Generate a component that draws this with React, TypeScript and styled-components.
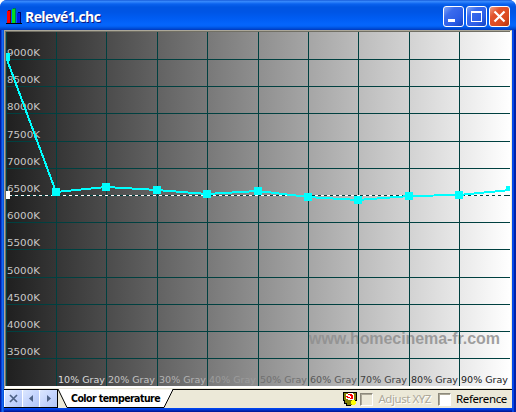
import React from "react";
import styled, { createGlobalStyle } from "styled-components";

const Global = createGlobalStyle`
  html, body { margin: 0; padding: 0; background: #fff; overflow: hidden; }
  * { box-sizing: border-box; }
`;

const Window = styled.main`
  width: 516px;
  height: 412px;
  display: flex;
  flex-direction: column;
  overflow: hidden;
  border-radius: 7px 7px 0 0;
  background: #0543e0;
`;

const TitleBar = styled.header`
  height: 30px;
  flex: none;
  display: flex;
  align-items: center;
  padding: 3px 6px 0 6px;
  background: linear-gradient(
    180deg,
    #0a4bd0 0, #3a8bfa 1px, #2f82fb 2px, #0a62ee 4px, #0055e2 7px,
    #0055e5 12px, #005cf2 18px, #0465fb 24px, #0463f8 26px, #0052dc 28px, #0038bd 30px
  );
`;

const Title = styled.h1`
  flex: 1;
  margin: 0 0 0 3px;
  font: 700 14px/20px "Open Sans", "Noto Sans", sans-serif;
  letter-spacing: -0.6px;
  color: #fff;
  text-shadow: 1px 1px 0 #0a1883;
  white-space: nowrap;
`;

const Controls = styled.div`
  display: flex;
  gap: 2px;
`;

const ControlButton = styled.button<{ $danger?: boolean }>`
  width: 21px;
  height: 21px;
  padding: 0;
  border: 1px solid #fff;
  border-radius: 3px;
  background: ${(p) =>
    p.$danger
      ? "linear-gradient(135deg, #f0a188 0, #e2532c 30%, #da4a20 70%, #b5330d 100%)"
      : "linear-gradient(135deg, #82a6f6 0, #3a6bed 30%, #2a5ce6 70%, #1342c0 100%)"};
  svg { display: block; }
`;

const Body = styled.section`
  flex: 1;
  display: flex;
  flex-direction: column;
  padding: 0 4px 4px;
  background: linear-gradient(90deg, #001ea0 0 1px, #0843dc 1px 2px, #166aee 2px 3px, #0855dd 3px 4px, transparent 4px 512px, #0548e8 512px 514px, #0022a8 514px),
    linear-gradient(180deg, transparent 378px, #0045ee 378px 379px, #0030c8 380px, #00138c 382px);
`;

const Client = styled.div`
  flex: 1;
  display: flex;
  flex-direction: column;
  background: #ece9d8;
`;

const ChartFrame = styled.div`
  height: 359px;
  display: flex;
  padding: 0 1px 2px 0;
  border-top: 1px solid #aca899;
  border-left: 1px solid #aca899;
  border-right: 1px solid #ece9d8;
  border-bottom: 1px solid #ece9d8;
  background: #fff;
`;

const ChartInner = styled.div`
  width: 505px;
  height: 355px;
  border-top: 1px solid #716f64;
  border-left: 1px solid #716f64;
`;

const Chart = styled.svg`
  display: block;
`;

const AxisText = styled.text`
  font: 9px "DejaVu Sans", sans-serif;
`;

const Watermark = styled.text`
  font: 700 16px "Liberation Sans", Arial, sans-serif;
  fill: #8f8f8f;
  fill-opacity: 0.85;
`;

const TabBar = styled.footer`
  flex: 1;
  display: flex;
  background: #ece9d8;
`;

const NavGroup = styled.div`
  width: 54px;
  display: flex;
  gap: 1px;
  padding: 0 0 0 1px;
  border: solid #000;
  border-width: 1px 1px 1px 0;
  background: #fff;
`;

const NavButton = styled.button`
  flex: 1;
  display: grid;
  place-items: center;
  padding: 0;
  border: 0;
  border-radius: 1px;
  background: linear-gradient(135deg, #dce7ff, #c3d3fd 55%, #b3c6f5);
`;

const Tab = styled.div`
  width: 117px;
  display: grid;
  > * { grid-area: 1 / 1; }
`;

const TabLabel = styled.span`
  padding-left: 13px;
  font: 700 10.5px/19px "DejaVu Sans Condensed", "DejaVu Sans", sans-serif;
  font-stretch: condensed;
  letter-spacing: -0.55px;
  color: #000;
  white-space: nowrap;
`;

const Options = styled.div`
  flex: 1;
  display: flex;
  align-items: center;
  justify-content: flex-end;
  padding-right: 5px;
  border-top: 1px solid #000;
`;

const Toggle = styled.label<{ $disabled?: boolean }>`
  display: flex;
  align-items: center;
  gap: 5px;
  margin-left: ${(p) => (p.$disabled ? "3px" : "7px")};
  font: 11.5px/16px "Noto Sans", sans-serif;
  letter-spacing: ${(p) => (p.$disabled ? "-0.45px" : "-0.35px")};
  color: ${(p) => (p.$disabled ? "#aca899" : "#000")};
  text-shadow: ${(p) => (p.$disabled ? "1px 1px 0 #fff" : "none")};
  white-space: nowrap;
`;

const Box = styled.span<{ $disabled?: boolean }>`
  width: 13px;
  height: 13px;
  border: 1px solid;
  border-color: #8c897c #fff #fff #8c897c;
  box-shadow: inset 1px 1px 0 #aca899;
  background: ${(p) => (p.$disabled ? "#ece9d8" : "#fff")};
`;

const COLUMNS = [6, 56, 106, 157, 207, 258, 308, 358, 409, 459];
const ROWS = [59, 86, 113, 141, 168, 195, 222, 249, 277, 304, 331, 358];
const GRAY_LABELS = ["#dcdcdc", "#c4c4c4", "#b4b4b4", "#9c9c9c", "#707070", "#585858", "#404040", "#2a2a2a", "#161616"];
const POINTS = [
  [6, 57], [56, 192], [106, 187], [157, 190], [207, 194], [258, 191],
  [308, 197], [358, 200], [409, 196], [459, 195], [510, 190],
];

function TemperatureChart() {
  return (
    <Chart width="504" height="354" viewBox="6 32 504 354">
      <defs>
        <linearGradient id="ramp">
          <stop offset="0" stopColor="#1f1f1f" />
          <stop offset="1" stopColor="#fff" />
        </linearGradient>
      </defs>
      <rect x="6" y="32" width="504" height="354" fill="url(#ramp)" />
      <Watermark x="309" y="344" textLength="191">www.homecinema-fr.com</Watermark>
      <g fill="#004040" shapeRendering="crispEdges">
        {COLUMNS.map((x) => <rect key={x} x={x} y="32" width="1" height="354" />)}
        {ROWS.map((y) => <rect key={y} x="6" y={y} width="504" height="1" />)}
      </g>
      {ROWS.map((y, i) => (
        <AxisText key={y} x="7" y={y - 3} textLength="33" lengthAdjust="spacingAndGlyphs" fill="#c8c8c8">{`${9000 - i * 500}K`}</AxisText>
      ))}
      {GRAY_LABELS.map((fill, i) => (
        <AxisText key={fill} x={COLUMNS[i + 1] + 2} y="383" textLength="47" lengthAdjust="spacingAndGlyphs" fill={fill}>{`${(i + 1) * 10}% Gray`}</AxisText>
      ))}
      <path d="M9 195.5H505" stroke="#fff" strokeDasharray="3 3" shapeRendering="crispEdges" />
      <rect x="6" y="191" width="4" height="8" fill="#fff" />
      <g fill="#00ffff" shapeRendering="crispEdges">
        <polyline points={POINTS.map((p) => p.join(",")).join(" ")} fill="none" stroke="#00ffff" strokeWidth="2" />
        {POINTS.map(([x, y], i) => (
          <rect key={x} x={x - 4} y={y - 4} width="8" height={i === POINTS.length - 1 ? 5 : 8} />
        ))}
      </g>
    </Chart>
  );
}

function AppIcon() {
  return (
    <svg width="16" height="17" viewBox="0 0 16 17" shapeRendering="crispEdges">
      <path d="M0 15h16v1H0z" fill="#000" />
      <path d="M1 3h3v12H1z" fill="#f00" /><path d="M2 2h3v1H2zM4 3h1v12H4z" fill="#700" />
      <path d="M6 1h3v14H6z" fill="#0d2" /><path d="M7 0h3v1H7zM9 1h1v14H9z" fill="#075" />
      <path d="M11 5h3v10h-3z" fill="#0018e8" /><path d="M12 4h3v1h-3zM14 5h1v10h-1z" fill="#000060" />
    </svg>
  );
}

function SensorIcon() {
  return (
    <svg width="14" height="14" viewBox="0 0 14 14" shapeRendering="crispEdges">
      <path d="M0 0h14v9h-2v4H8v1H3v-2H1V9H0z" fill="#000" />
      <path d="M1 1h12v7h-1v3H9v2H4v-2H2V8H1z" fill="#808000" />
      <path d="M3 2h2V1h5v1h1v6H5V7H3z" fill="#fff" />
      <path d="M5 2h4v1h1v4H7V6h1V4H7V3H5zM3 4h2v1h2v1H4V5H3z" fill="#f00" />
      <path d="M9 8h3v1h1v3h-1v1H9v-1H8V9h1z" fill="#ff0" />
    </svg>
  );
}

export default function App() {
  return (
    <>
      <Global />
      <Window>
        <TitleBar>
          <AppIcon />
          <Title>Relevé1.chc</Title>
          <Controls>
            <ControlButton aria-label="Minimize">
              <svg width="19" height="19"><path d="M4 12h7v3H4z" fill="#fff" /></svg>
            </ControlButton>
            <ControlButton aria-label="Maximize">
              <svg width="19" height="19" shapeRendering="crispEdges"><path d="M4 4h11v11H4zM5 6v8h9V6z" fill="#fff" fillRule="evenodd" /></svg>
            </ControlButton>
            <ControlButton $danger aria-label="Close">
              <svg width="19" height="19"><path d="M4.500 4.500l10 10M14.500 4.500l-10 10" stroke="#fff" strokeWidth="2.2" /></svg>
            </ControlButton>
          </Controls>
        </TitleBar>
        <Body>
          <Client>
            <ChartFrame>
              <ChartInner><TemperatureChart /></ChartInner>
            </ChartFrame>
            <TabBar>
              <NavGroup>
                <NavButton aria-label="Close tab">
                  <svg width="9" height="9"><path d="M1 1l7 7M8 1L1 8" stroke="#4d6185" strokeWidth="1.7" /></svg>
                </NavButton>
                <NavButton aria-label="Previous">
                  <svg width="9" height="9"><path d="M6 1v7L2 4.500z" fill="#4d6185" /></svg>
                </NavButton>
                <NavButton aria-label="Next">
                  <svg width="9" height="9"><path d="M3 1v7l4-3.500z" fill="#4d6185" /></svg>
                </NavButton>
              </NavGroup>
              <Tab>
                <svg width="117" height="19">
                  <path d="M0 0l9 18.500h97L115 .5" fill="#fff" stroke="#000" />
                  <path d="M114.500 .5H117" stroke="#000" />
                </svg>
                <TabLabel>Color temperature</TabLabel>
              </Tab>
              <Options>
                <SensorIcon />
                <Toggle $disabled><Box $disabled />Adjust XYZ</Toggle>
                <Toggle><Box />Reference</Toggle>
              </Options>
            </TabBar>
          </Client>
        </Body>
      </Window>
    </>
  );
}
